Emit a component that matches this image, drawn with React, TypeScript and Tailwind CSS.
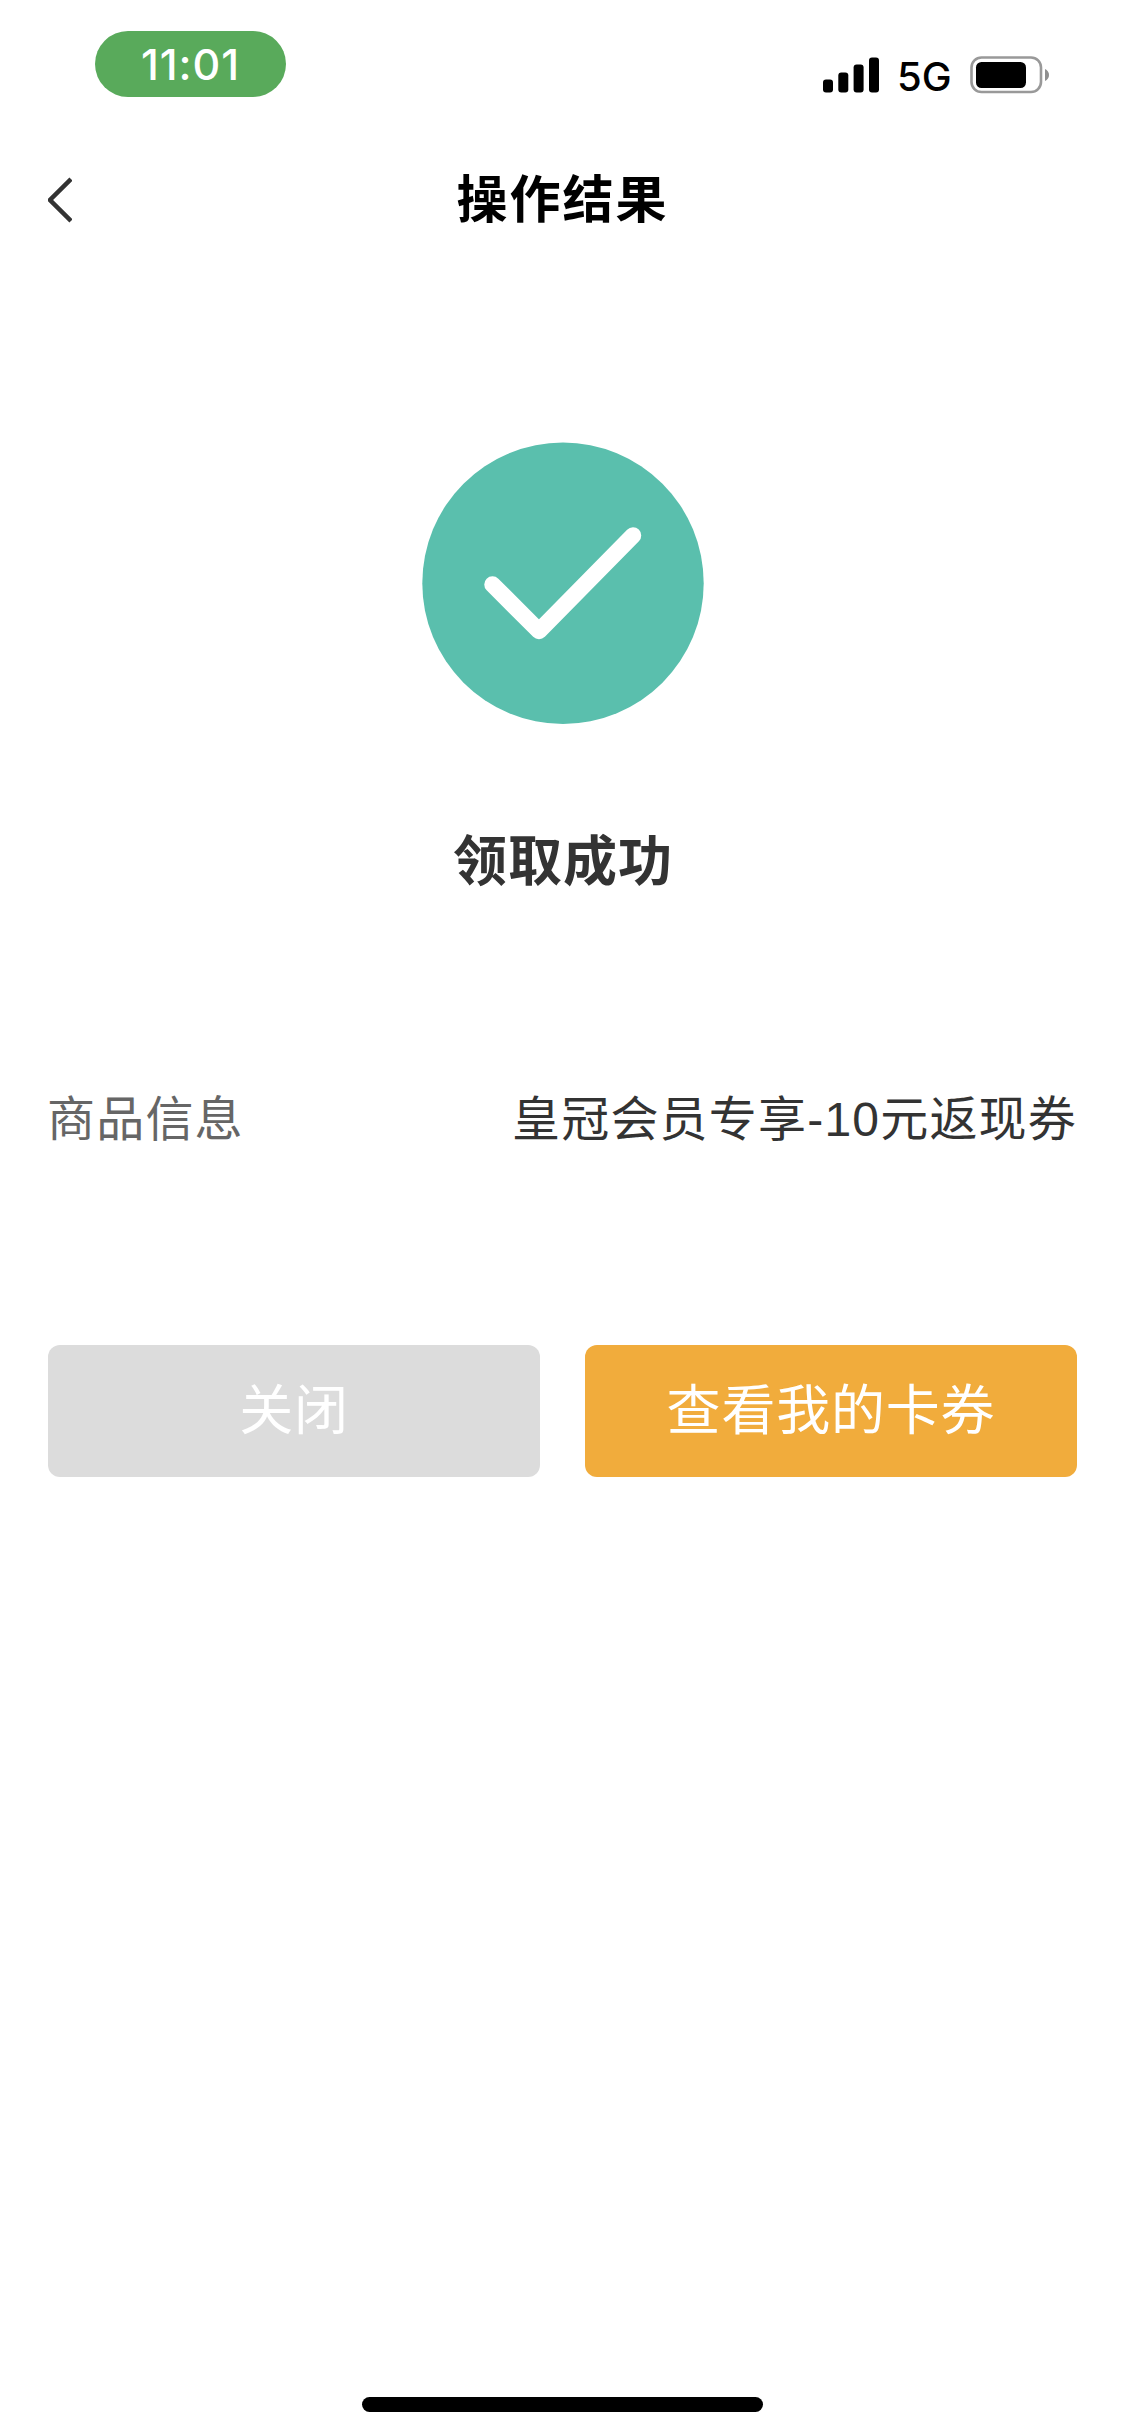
import type { ReactNode } from 'react';

interface InfoRowProps {
  label: string;
  value: string;
}

interface ActionButtonProps {
  children: ReactNode;
  className: string;
}

function SignalIcon() {
  return (
    <svg aria-hidden="true" className="w-14 h-9" viewBox="0 0 56 36" fill="currentColor">
      <rect x="0" y="22.5" width="10" height="13" rx="3" />
      <rect x="15.3" y="15.5" width="10" height="20" rx="3" />
      <rect x="30.6" y="7.5" width="10" height="28" rx="3" />
      <rect x="46" y="0.5" width="10" height="35" rx="3" />
    </svg>
  );
}

function BatteryIcon() {
  return (
    <svg aria-hidden="true" className="w-20 h-[38px]" viewBox="0 0 80 38">
      <rect x="1.5" y="1.5" width="69.5" height="34.5" rx="10" fill="none" stroke="#999" strokeWidth="2.6" />
      <rect x="6" y="6" width="50" height="26" rx="5.5" fill="#000" />
      <path d="M75 13v12c2.5-1 4-3.400 4-6s-1.500-5-4-6Z" fill="#8f8f8f" />
    </svg>
  );
}

function StatusBar() {
  return (
    <div className="h-32 flex items-start justify-between pl-[95px] pr-[75px] font-['Inter',sans-serif]">
      <div className="mt-[31px] w-[191px] h-[66px] rounded-[33px] bg-[#59aa5b] text-white text-[43px] leading-[67px] tracking-[0.9px] font-medium text-center">
        11:01
      </div>
      <div className="mt-[54px] flex items-center text-black">
        <SignalIcon />
        <span className="ml-[18px] w-[54px] mr-[19px] pt-1 text-[40px] leading-[38px] font-medium">5G</span>
        <BatteryIcon />
      </div>
    </div>
  );
}

function NavBar() {
  return (
    <header className="h-36 flex items-center px-12">
      <button type="button" aria-label="返回" className="w-12">
        <svg aria-hidden="true" className="w-6 h-12" viewBox="0 0 24 48" fill="none" stroke="#333" strokeWidth="4.5">
          <path d="M23 3 2 24l21 21" />
        </svg>
      </button>
      <h1 className="flex-1 pt-0.5 text-center text-[51px] leading-[72px] tracking-[2px] font-bold text-black">
        操作结果
      </h1>
      <div className="w-12" />
    </header>
  );
}

function InfoRow({ label, value }: InfoRowProps) {
  return (
    <div className="flex items-center justify-between text-[48px] leading-[72px] tracking-[1.2px]">
      <span className="-ml-px text-[#666]">{label}</span>
      <span className="text-[#333]">{value}</span>
    </div>
  );
}

function ActionButton({ children, className }: ActionButtonProps) {
  return (
    <button
      type="button"
      className={`flex-1 h-[132px] rounded-xl text-[54px] leading-[132px] tracking-[0.8px] text-white ${className}`}
    >
      {children}
    </button>
  );
}

export default function App() {
  return (
    <div
      lang="zh-CN"
      className="w-full h-[2435px] flex flex-col bg-white font-['Liberation_Sans','Noto_Sans_CJK_SC',sans-serif]"
    >
      <StatusBar />
      <NavBar />
      <main className="flex-1 px-12">
        <div className="pt-[170px] flex flex-col items-center">
          <svg aria-hidden="true" className="w-[282px] h-[282px]" viewBox="0 0 282 282">
            <circle cx="141" cy="141.2" r="140.7" fill="#5abfad" />
            <path
              d="M70.500 142.500l46.500 46.500 94-95.500"
              fill="none"
              stroke="#fff"
              strokeWidth="16.5"
              strokeLinecap="round"
              strokeLinejoin="round"
            />
          </svg>
          <h2 className="mt-[98px] pl-px text-[54px] leading-20 tracking-[1px] font-bold text-[#333]">
            领取成功
          </h2>
        </div>
        <div className="mt-[182px]">
          <InfoRow label="商品信息" value="皇冠会员专享-10元返现券" />
        </div>
        <div className="mt-[189px] flex gap-[45px]">
          <ActionButton className="bg-[#dcdcdc]">关闭</ActionButton>
          <ActionButton className="bg-[#f1ac3c]">查看我的卡券</ActionButton>
        </div>
      </main>
      <div className="mx-auto mb-[23px] w-[401px] h-[15px] rounded-full bg-black" />
    </div>
  );
}
